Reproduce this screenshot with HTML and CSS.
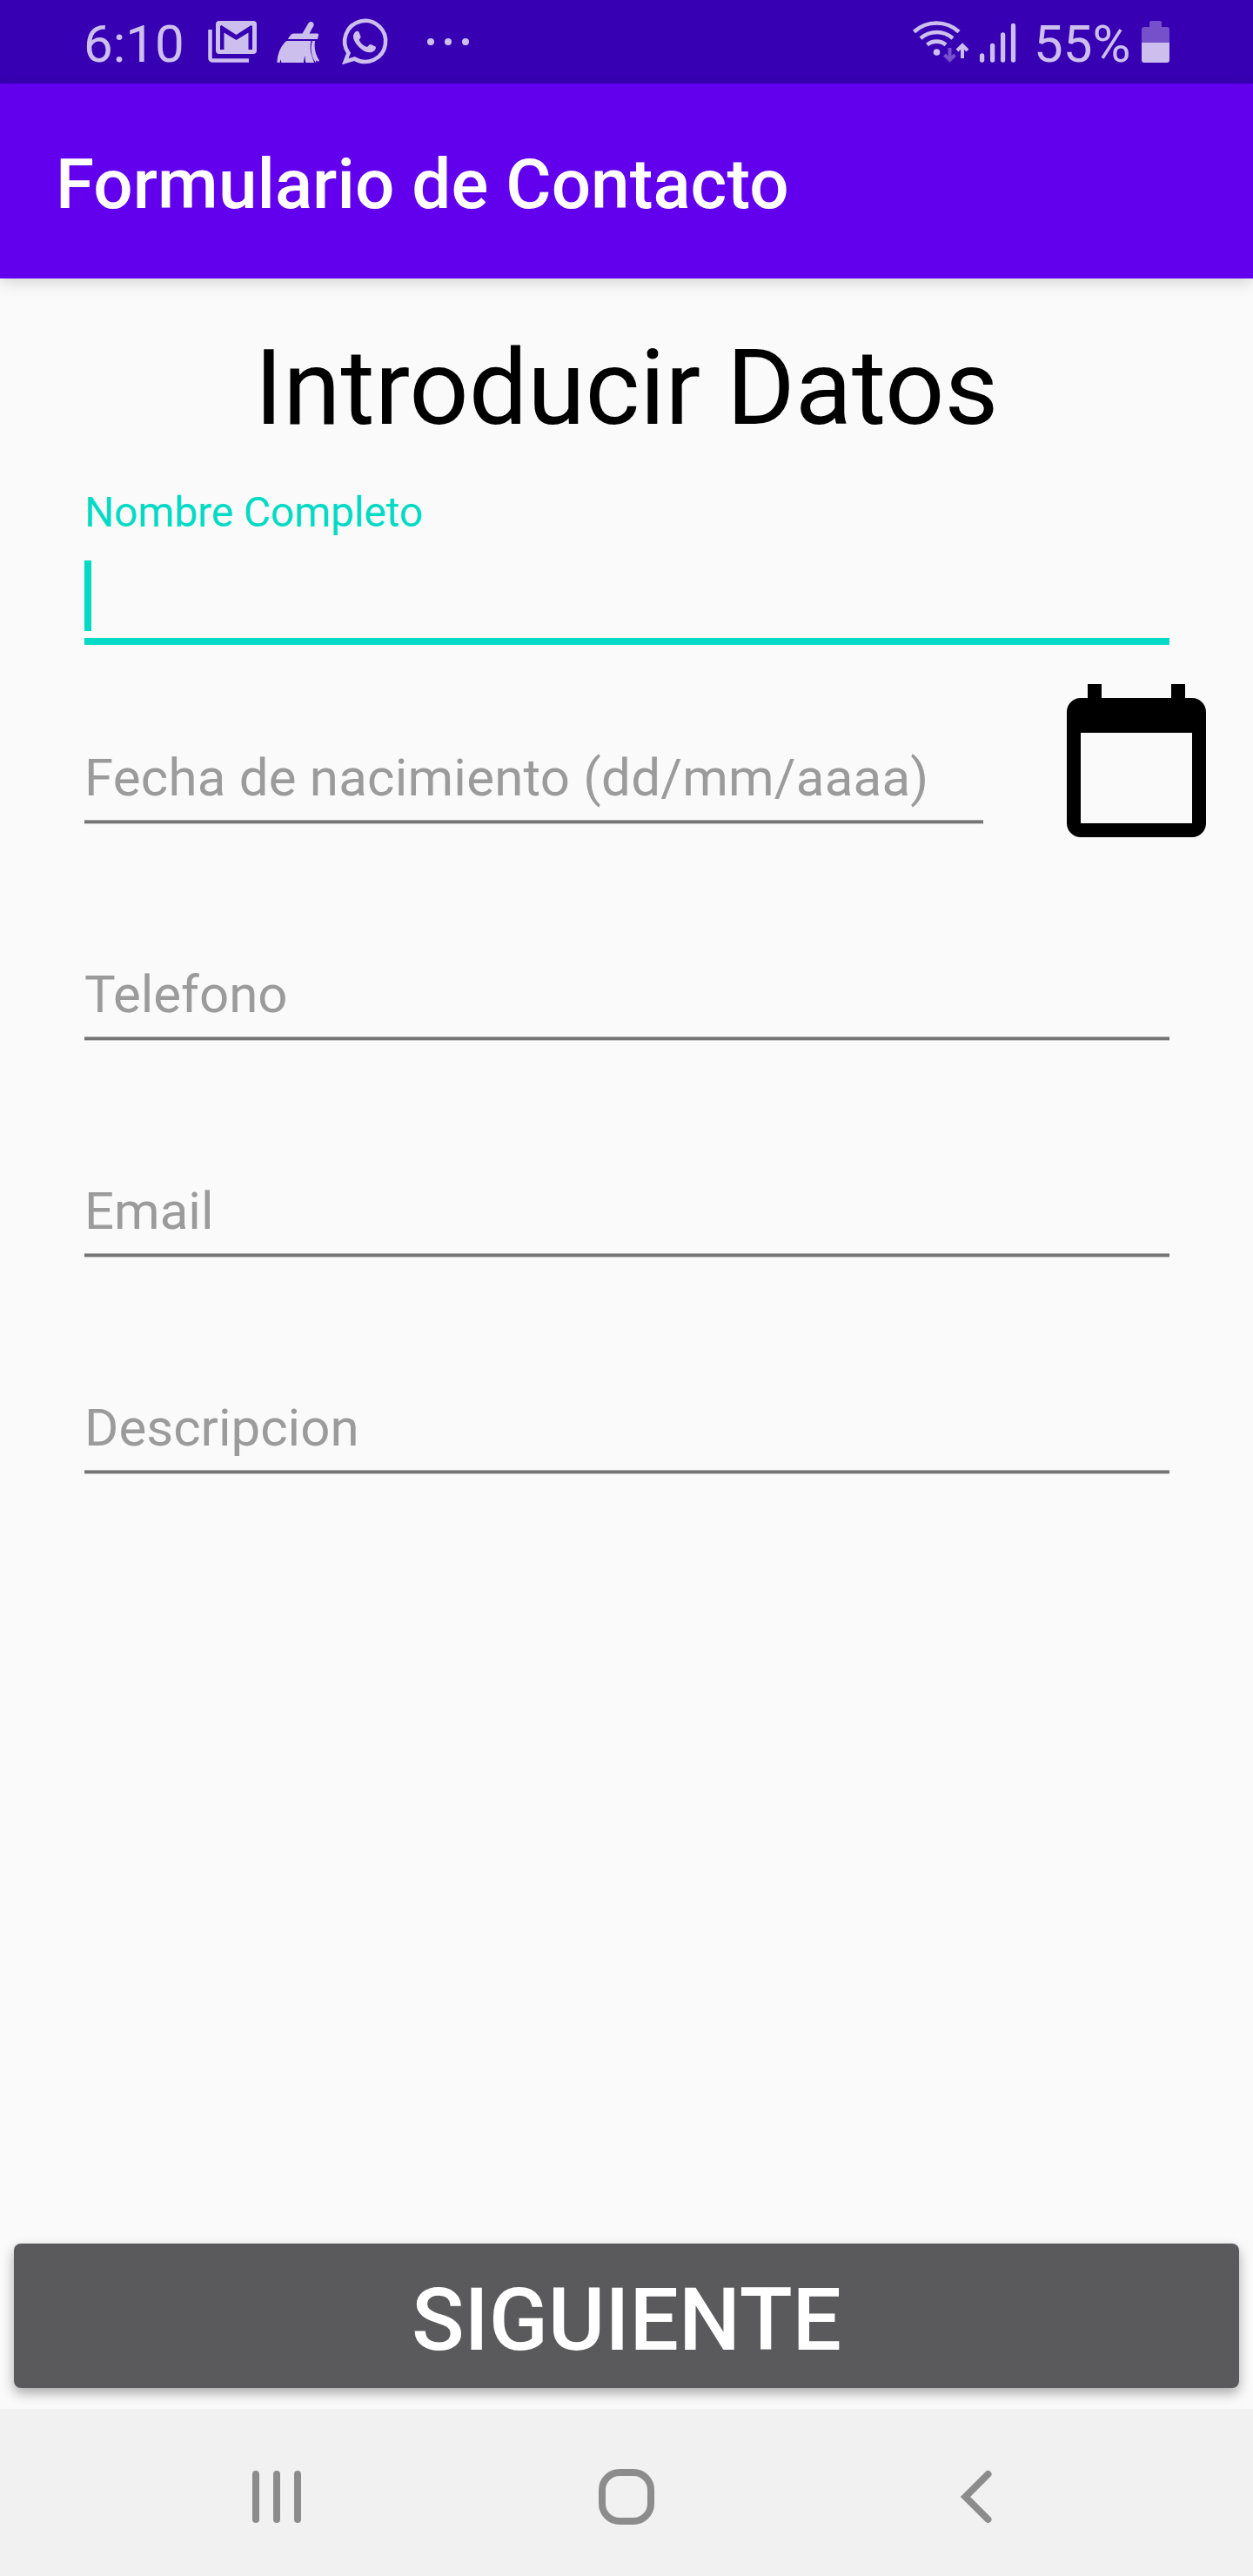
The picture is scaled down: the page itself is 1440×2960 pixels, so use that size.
FILE: index.html
```html
<!DOCTYPE html>
<html lang="es">
<head>
<meta charset="utf-8">
<title>Formulario de Contacto</title>
<link rel="stylesheet" href="styles.css">
</head>
<body>
<div class="screen">
  <div class="status-bar">
    <span class="clock">6:10</span>
    <svg class="status-icons" width="310" height="96" viewBox="230 0 310 96" aria-hidden="true">
      <path d="M241.500 34v33a2.500 2.500 0 0 0 2.500 2.500h42" stroke-width="4.500" fill="none" stroke="currentColor"/>
      <path fill-rule="evenodd" fill="currentColor" d="M252 24h39a4 4 0 0 1 4 4v30a4 4 0 0 1-4 4h-39a4 4 0 0 1-4-4V28a4 4 0 0 1 4-4zM253 30v27h4.500V37.500L271.500 46l14-8.500V57h4.500V30l-1.500-1L271.500 40 254.500 29z"/>
      <g fill="currentColor">
        <path d="M347.500 38.500l7-12c3-3.500 7-.5 6 3l-5 9h9c2 0 2 2 1 4l-.5 2.500H331c1.500-3 3.500-6.500 6.500-6.500z"/>
        <path d="M329.500 47h28c-1.500 6-1 12 .5 16l3 9h-9.500c-1-2.500-1-5-.8-8-1.200 2-1.700 5-1.700 8h-25.500l-1-4-1 4h-3c0-10 5-21 11-25z"/>
        <path d="M359 47h3c-1 7 0 15 5 22.500l-1.500 1.500-2-2-.5 3c-5-6-7-17-4-25z"/>
      </g>
      <path d="M396.700 70.700l3.800-9.700A23.500 23.500 0 1 1 407.500 67.500z" fill="none" stroke="currentColor" stroke-width="4.500"/>
      <path fill="currentColor" d="M408.500 36.500c2-1.500 4-.5 4.500 1.500l1.500 4c.5 2-2.500 3-1.500 4.500 2 4 5 6 8.500 7.500 1.500 0 2.500-3.500 4.500-3l5 2.300c2 1 .5 4-1 5.200-3.500 3-9 2-14-1.500-5-3.500-9-9-10-14-.3-2.500.8-5 2.500-6.500z"/>
      <g fill="currentColor"><circle cx="495" cy="48" r="4"/><circle cx="515" cy="48" r="4"/><circle cx="535" cy="48" r="4"/></g>
    </svg>
    <svg class="signal-icons" width="130" height="96" viewBox="1045 0 130 96" aria-hidden="true">
      <g fill="none" stroke="currentColor" stroke-width="4.600">
        <path d="M1050.500 36.500a38 38 0 0 1 51.500 0"/>
        <path d="M1058 44a28 28 0 0 1 37 0"/>
        <path d="M1065.500 51.500a17 17 0 0 1 21.500 0"/>
        <path d="M1106 67V53m-6 5l6-6 6 6" stroke-width="4"/>
        <path d="M1091.500 55v14m-6-6l6 6 6-6" stroke-width="4" opacity=".42"/>
      </g>
      <circle cx="1076.500" cy="60" r="3.800" fill="currentColor"/>
      <g stroke="currentColor" stroke-width="5.300" stroke-linecap="round"><path d="M1128.600 64v5M1140.600 52.500v16.500M1152.600 40v29M1164.500 29.500v39.500"/></g>
    </svg>
    <span class="battery-text">55%</span>
    <svg class="battery" width="32" height="48" viewBox="0 0 32 48" aria-hidden="true">
      <path fill="currentColor" opacity=".42" d="M9 2q0-2 2-2h10q2 0 2 2v5h6q3 0 3 3v15H0V10q0-3 3-3h6z"/>
      <path fill="currentColor" d="M0 25h32v20q0 3-3 3H3q-3 0-3-3z"/>
    </svg>
  </div>

  <header class="app-bar"><h1 class="app-title">Formulario de Contacto</h1></header>

  <main class="content">
    <h2 class="heading">Introducir Datos</h2>
    <div class="field-active">
      <span class="label">Nombre Completo</span>
      <span class="caret"></span>
    </div>
    <div class="date-row">
      <div class="field">Fecha de nacimiento (dd/mm/aaaa)</div>
      <svg class="calendar" width="192" height="192" viewBox="0 0 24 24" aria-hidden="true"><path d="M20 3h-1V1h-2v2H7V1H5v2H4c-1.100 0-2 .9-2 2v16c0 1.100.9 2 2 2h16c1.100 0 2-.9 2-2V5c0-1.100-.9-2-2-2zm0 18H4V8h16v13z"/></svg>
    </div>
    <div class="field field-spaced">Telefono</div>
    <div class="field field-spaced">Email</div>
    <div class="field field-spaced">Descripcion</div>
    <button class="next" type="button">SIGUIENTE</button>
  </main>

  <nav class="nav-bar">
    <svg width="60" height="64" viewBox="0 0 60 64" fill="none" stroke="currentColor" stroke-width="8" stroke-linecap="round"><path d="M6 6v52M30 6v52M54 6v52"/></svg>
    <svg class="home" width="64" height="64" viewBox="0 0 64 64" fill="none" stroke="currentColor" stroke-width="8"><rect x="4" y="4" width="56" height="56" rx="20"/></svg>
    <svg width="40" height="64" viewBox="0 0 40 64" fill="none" stroke="currentColor" stroke-width="8" stroke-linecap="round"><path d="M34.500 6L8.500 32l26 26"/></svg>
  </nav>
</div>
</body>
</html>
```
FILE: styles.css
```css
* { box-sizing: border-box; }

body {
  margin: 0;
  font-family: Roboto, "Liberation Sans", sans-serif;
  background: #fafafa;
}

.screen {
  width: 1440px;
  height: 2960px;
  display: flex;
  flex-direction: column;
  overflow: hidden;
}

.status-bar {
  height: 96px;
  display: flex;
  align-items: center;
  padding: 0 96px;
  background: #3700b3;
  color: #cdbfed;
  font-size: 60px;
  line-height: 70px;
}

.clock { width: 134px; padding-top: 5px; }
.status-icons { flex: none; }
.signal-icons { flex: none; margin-left: auto; margin-right: 13px; }
.battery-text { width: 124px; padding-top: 5px; white-space: nowrap; }
.battery { flex: none; }

.app-bar {
  height: 224px;
  display: flex;
  align-items: center;
  padding: 7px 64px 0;
  background: #6200ee;
  box-shadow: 0 4px 16px rgba(0, 0, 0, 0.16);
}

.app-title {
  margin: 0;
  color: #fff;
  font-size: 80px;
  font-weight: 500;
  line-height: 94px;
  letter-spacing: 0.07px;
}

.content {
  flex: 1;
  display: flex;
  flex-direction: column;
  padding: 56px 16px 24px;
}

.heading {
  margin: 0;
  color: #000;
  font-size: 120px;
  font-weight: 400;
  line-height: 140px;
  text-align: center;
}

.field {
  height: 88px;
  margin: 0 80px 0 81px;
  background: linear-gradient(#a9a9a9 1px, #757575 1px 4px, #c9c9c9 4px) bottom / 100% 5px no-repeat;
  color: #9b9b9b;
  font-size: 60px;
  line-height: 70px;
  white-space: nowrap;
}

.field-active {
  height: 181px;
  margin: 44px 80px 0 81px;
  display: flex;
  flex-direction: column;
  justify-content: space-between;
  padding-bottom: 8px;
  border-bottom: 8px solid #03dac5;
}

.label {
  color: #03dac5;
  font-size: 48px;
  line-height: 58px;
  letter-spacing: -0.16px;
}

.caret { width: 8px; height: 81px; background: #03dac5; }

.date-row {
  display: flex;
  align-items: flex-start;
  margin-top: 37px;
}

.date-row .field {
  width: 1033px;
  flex: none;
  margin: 81px 80px 0 81px;
  letter-spacing: 0.22px;
}

.calendar { display: block; flex: none; }

.field-spaced { margin-top: 161px; }
.date-row + .field-spaced { margin-top: 138px; }

.next {
  height: 166px;
  margin-top: auto;
  padding: 9px 0 0;
  border: 0;
  border-radius: 8px;
  background: #5a595b;
  color: #fff;
  box-shadow: 0 6px 14px rgba(0, 0, 0, 0.32);
  font: 500 100px/117px Roboto, "Liberation Sans", sans-serif;
}

.nav-bar {
  height: 192px;
  display: flex;
  align-items: center;
  justify-content: space-between;
  padding: 10px 299px 0 288px;
  background: #f1f1f1;
  color: #8c8c8c;
}

.home { margin-right: 9px; }
```
